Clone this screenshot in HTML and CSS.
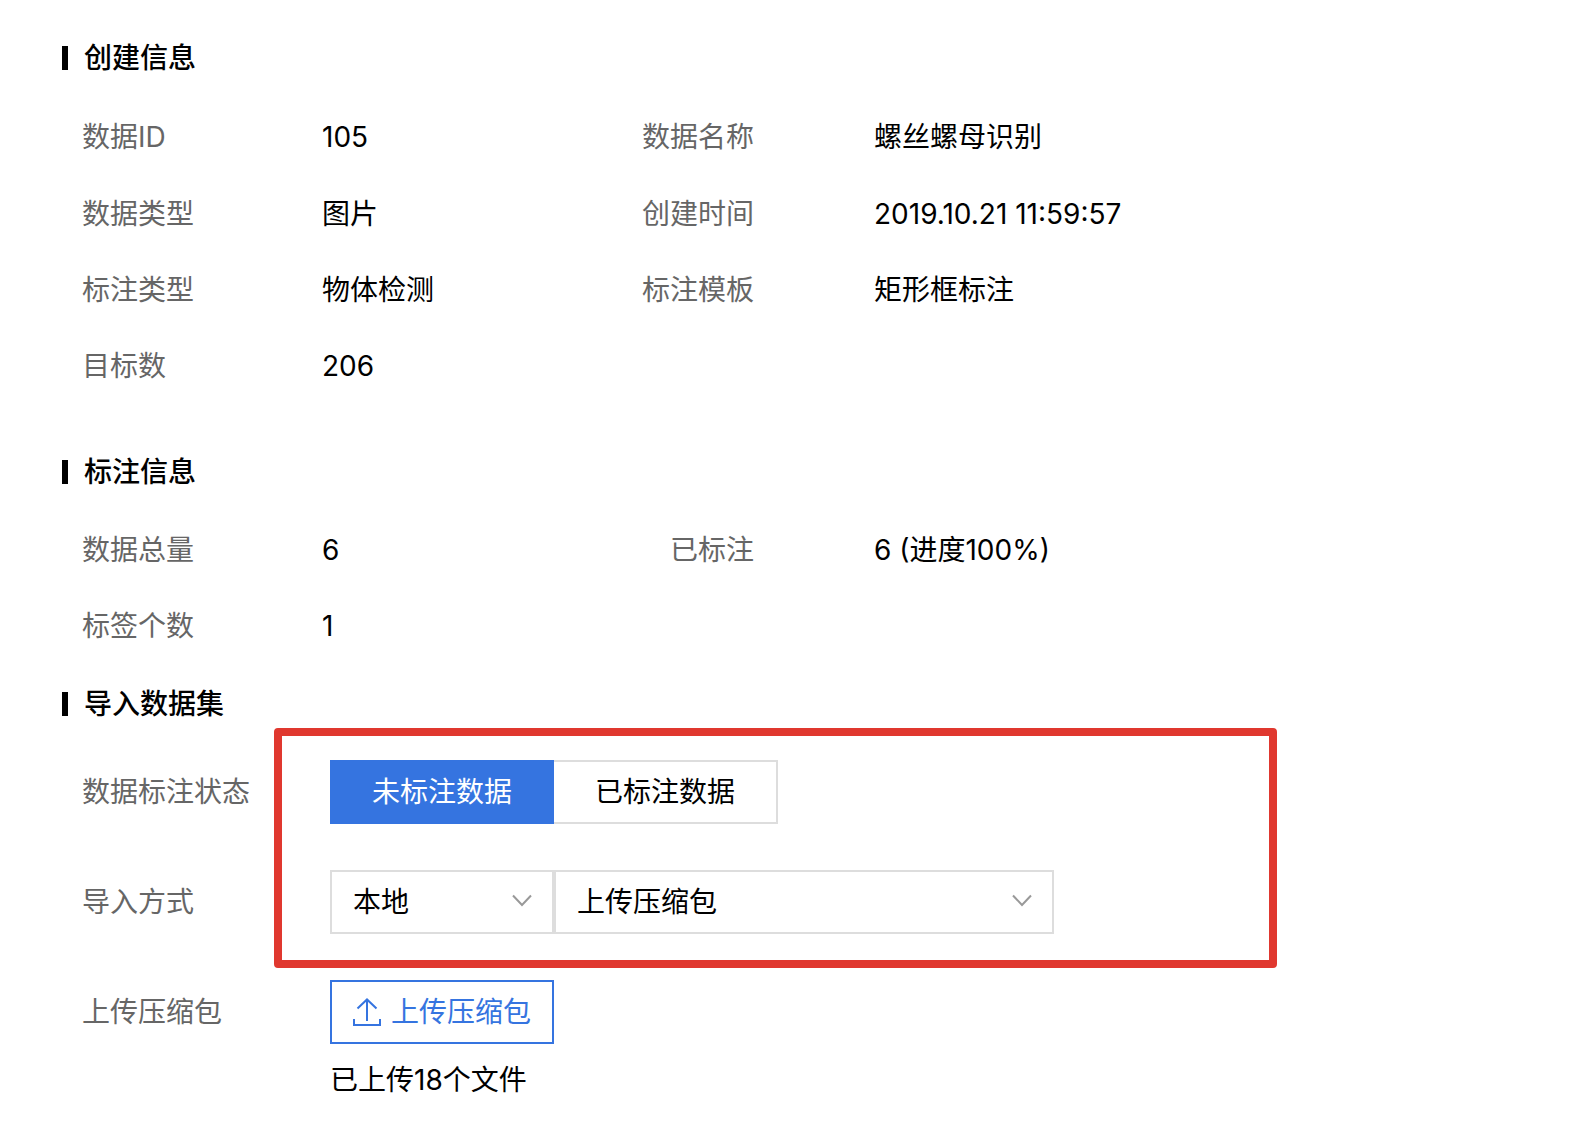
FILE: index.html
```html
<!DOCTYPE html>
<html lang="zh-CN">
<head>
    <meta charset="UTF-8">
    <meta name="viewport" content="width=device-width, initial-scale=1.0">
    <title>导入数据集</title>
    <link rel="stylesheet" href="styles.css">
</head>
<body>
    <main class="page">
        <!-- 创建信息 -->
        <section class="section">
            <h2 class="section-title">创建信息</h2>
            <dl class="info">
                <dt>数据ID</dt>
                <dd>105</dd>
                <dt class="second">数据名称</dt>
                <dd>螺丝螺母识别</dd>
                <dt>数据类型</dt>
                <dd>图片</dd>
                <dt class="second">创建时间</dt>
                <dd>2019.10.21 11:59:57</dd>
                <dt>标注类型</dt>
                <dd>物体检测</dd>
                <dt class="second">标注模板</dt>
                <dd>矩形框标注</dd>
                <dt>目标数</dt>
                <dd>206</dd>
            </dl>
        </section>

        <!-- 标注信息 -->
        <section class="section">
            <h2 class="section-title">标注信息</h2>
            <dl class="info">
                <dt>数据总量</dt>
                <dd>6</dd>
                <dt class="second">已标注</dt>
                <dd>6 (进度100%)</dd>
                <dt>标签个数</dt>
                <dd>1</dd>
            </dl>
        </section>

        <!-- 导入数据集 -->
        <section class="section">
            <h2 class="section-title">导入数据集</h2>
            <form class="import-form">
                <div class="highlight">
                    <div class="field">
                        <span class="field-label" id="status-label">数据标注状态</span>
                        <div class="segment" role="group" aria-labelledby="status-label">
                            <button type="button" class="segment-button active" aria-pressed="true">未标注数据</button>
                            <button type="button" class="segment-button" aria-pressed="false">已标注数据</button>
                        </div>
                    </div>
                    <div class="field">
                        <label class="field-label" for="import-source">导入方式</label>
                        <div class="selects">
                            <div class="select-box select-small">
                                <select id="import-source">
                                    <option>本地</option>
                                </select>
                                <svg class="arrow" width="20" height="14" viewBox="0 0 20 14" aria-hidden="true"><path d="M1 1.500L10 11L19 1.500"/></svg>
                            </div>
                            <div class="select-box select-large">
                                <select id="import-type" aria-label="上传类型">
                                    <option>上传压缩包</option>
                                </select>
                                <svg class="arrow" width="20" height="14" viewBox="0 0 20 14" aria-hidden="true"><path d="M1 1.5L10 11L19 1.5"/></svg>
                            </div>
                        </div>
                    </div>
                </div>
                <div class="field">
                    <span class="field-label">上传压缩包</span>
                    <button type="button" class="upload-button">
                        <svg width="28" height="28" viewBox="0 0 28 28" aria-hidden="true"><path d="M1 21V27H27V21M14 23V2M4.5 10.5L14 1.5L23.5 10.5"/></svg>
                        上传压缩包
                    </button>
                </div>
                <p class="upload-tip">已上传18个文件</p>
            </form>
        </section>
    </main>
</body>
</html>
```
FILE: styles.css
```css
* {
    box-sizing: border-box;
}

body {
    margin: 0;
    background-color: #fff;
    color: #000;
    font-family: Inter, "Noto Sans CJK SC", sans-serif;
    font-size: 28px;
    line-height: 40px;
}

.page {
    padding: 38px 62px;
}

.section-title {
    display: flex;
    align-items: center;
    gap: 16px;
    margin: 0 0 20px;
    font-size: 28px;
    font-weight: 500;
}

.section-title::before {
    content: "";
    width: 6px;
    height: 24px;
    background-color: #000;
}

/* Label / value pairs, two per row */
.info {
    display: grid;
    grid-template-columns: 240px 320px 112px 1fr;
    grid-auto-rows: 76px;
    align-items: center;
    margin: 0 0 20px;
    padding-left: 20px;
}

.section:first-child .info {
    grid-template-rows: 78px;
    margin-bottom: 48px;
}

.info dt {
    color: #666;
}

.info dt.second {
    text-align: right;
}

.info dd {
    margin: 0;
}

.info dt.second + dd {
    padding-left: 120px;
}

/* Import form */
.import-form {
    padding: 16px 0 0 20px;
}

.highlight {
    position: relative;
}

/* Red frame drawn over the two option rows */
.highlight::after {
    content: "";
    position: absolute;
    top: -32px;
    right: 231px;
    bottom: -34px;
    left: 192px;
    border: 8px solid #e0382f;
    border-radius: 4px;
    pointer-events: none;
}

.field {
    display: flex;
    align-items: center;
    margin-bottom: 46px;
}

.field-label {
    flex: none;
    width: 248px;
    color: #666;
}

button,
select {
    height: 64px;
    border: 2px solid #ddd;
    border-radius: 0;
    background-color: #fff;
    color: #000;
    font: inherit;
    cursor: pointer;
}

.segment,
.selects {
    display: flex;
}

.segment-button {
    width: 224px;
    padding: 0;
}

.segment-button + .segment-button {
    border-left: 0;
}

.segment-button.active {
    border-color: #3574e0;
    background-color: #3574e0;
    color: #fff;
}

.select-box {
    position: relative;
}

.select-small {
    width: 224px;
}

.select-large {
    width: 500px;
}

.select-box select {
    width: 100%;
    padding: 0 60px 0 21px;
    appearance: none;
}

.arrow {
    position: absolute;
    top: 24px;
    right: 22px;
    fill: none;
    stroke: #999;
    stroke-width: 2;
    pointer-events: none;
}

.upload-button {
    display: flex;
    align-items: center;
    justify-content: center;
    gap: 10px;
    width: 224px;
    padding: 0;
    border-color: #3574e0;
    color: #3574e0;
}

.upload-button svg {
    fill: none;
    stroke: #3574e0;
    stroke-width: 2;
}

.upload-tip {
    margin: -30px 0 0 248px;
}
```
